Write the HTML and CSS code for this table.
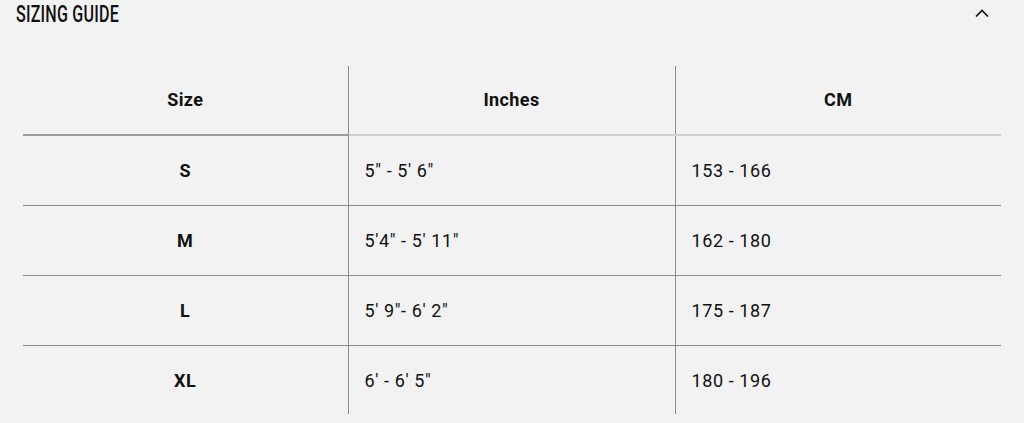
FILE: index.html
```html
<!DOCTYPE html>
<html>
<head>
<meta charset="utf-8">
<link rel="stylesheet" href="styles.css">
</head>
<body>
<section class="guide">
  <div class="guide-head">
    <h2 class="guide-title"><span>SIZING GUIDE</span></h2>
    <svg class="chevron" width="14" height="8" viewBox="0 0 14 8"><path d="M1 7.5 L7 1.5 L13 7.5" fill="none" stroke="#111" stroke-width="1.6"/></svg>
  </div>
  <table class="size-table">
    <colgroup><col class="c1"><col class="c2"><col class="c3"></colgroup>
    <thead>
      <tr><th class="first">Size</th><th>Inches</th><th>CM</th></tr>
    </thead>
    <tbody>
      <tr><td class="size">S</td><td>5" - 5' 6"</td><td>153 - 166</td></tr>
      <tr><td class="size">M</td><td>5'4" - 5' 11"</td><td>162 - 180</td></tr>
      <tr><td class="size">L</td><td>5' 9"- 6' 2"</td><td>175 - 187</td></tr>
      <tr><td class="size">XL</td><td>6' - 6' 5"</td><td>180 - 196</td></tr>
    </tbody>
  </table>
</section>
</body>
</html>
```
FILE: styles.css
```css
html, body { margin: 0; padding: 0; background: #f2f2f2; }
body { font-family: Roboto, "Liberation Sans", sans-serif; color: #111; }
.guide { width: 1024px; }
.guide-head {
  display: flex; justify-content: space-between; align-items: center;
  padding: 0 35px 0 16px; height: 28px;
}
.guide-title { margin: 0; font-size: 24px; font-weight: 500; line-height: 28px; letter-spacing: 0.3px; }
.guide-title span { display: inline-block; transform: scaleX(0.67); transform-origin: left center; }
.chevron { display: block; margin-top: -2px; }
.size-table {
  margin: 38px 23px 0 23px; width: 978px; border-collapse: collapse; table-layout: fixed;
  font-size: 18px;
}
.size-table col.c1 { width: 325px; }
.size-table col.c2 { width: 327px; }
.size-table col.c3 { width: 326px; }
.size-table th {
  height: 69px; padding: 0 0 2px 0; font-weight: 700; text-align: center; letter-spacing: 0.4px;
  border-bottom: 2px solid #cfcfcf; box-sizing: border-box;
}
.size-table th.first { border-bottom-color: #9a9a9a; }
.size-table td {
  height: 69px; padding: 0 16px; text-align: left; letter-spacing: 0.6px;
  border-bottom: 1px solid #8a8a8a;
}
.size-table tbody tr:last-child td { border-bottom: none; height: 68px; }
.size-table td.size { text-align: center; font-weight: 700; }
.size-table th + th, .size-table td + td { border-left: 1px solid #8a8a8a; }
```
